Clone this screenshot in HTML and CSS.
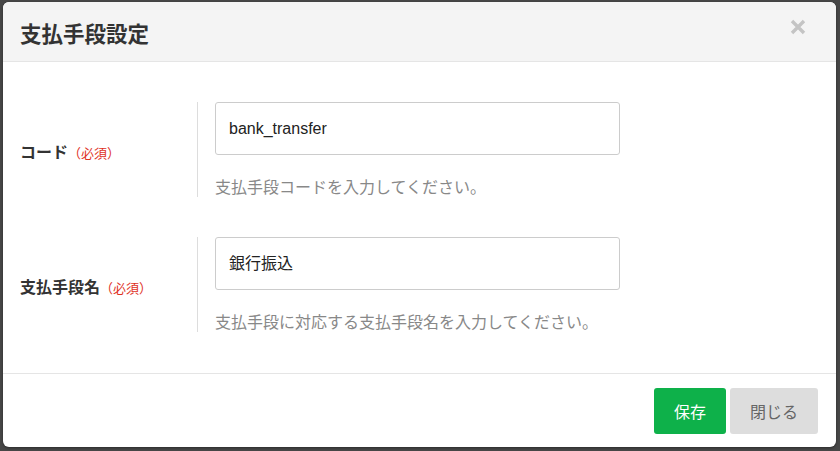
FILE: index.html
```html
<!DOCTYPE html>
<html lang="ja">
<head>
<meta charset="utf-8">
<title>支払手段設定</title>
<link rel="stylesheet" href="styles.css">
</head>
<body>
<div class="modal">
  <div class="modal-header">
    <h1 class="modal-title">支払手段設定</h1>
    <button class="close" aria-label="close">
      <svg width="16" height="16" viewBox="0 0 16 16"><path d="M2 2L14 14M14 2L2 14" stroke="#c4c4c4" stroke-width="3.4" stroke-linecap="butt"/></svg>
    </button>
  </div>
  <div class="modal-body">
    <div class="form-row">
      <div class="form-label">コード<span class="req">（必須）</span></div>
      <div class="form-field">
        <div class="input">bank_transfer</div>
        <div class="help">支払手段コードを入力してください。</div>
      </div>
    </div>
    <div class="form-row">
      <div class="form-label">支払手段名<span class="req">（必須）</span></div>
      <div class="form-field">
        <div class="input">銀行振込</div>
        <div class="help">支払手段に対応する支払手段名を入力してください。</div>
      </div>
    </div>
  </div>
  <div class="modal-footer">
    <button class="btn btn-save">保存</button>
    <button class="btn btn-close">閉じる</button>
  </div>
</div>
</body>
</html>
```

FILE: styles.css
```css
* { box-sizing: border-box; }
html, body { margin: 0; padding: 0; }
body {
  background: #474747;
  width: 840px;
  height: 451px;
  overflow: hidden;
  font-family: "Liberation Sans", "Noto Sans CJK JP", sans-serif;
  color: #333;
  padding: 2px 4px 0 3px;
}
.modal {
  width: 833px;
  height: 445px;
  background: #fff;
  border-radius: 6px;
  overflow: hidden;
  display: flex;
  flex-direction: column;
  box-shadow: 0 1px 3px rgba(0,0,0,0.4);
}
.modal-header {
  height: 60px;
  background: #f4f4f4;
  border-bottom: 1px solid #e5e5e5;
  display: flex;
  align-items: center;
  justify-content: space-between;
  padding: 0 30px 0 17px;
}
.modal-title {
  margin: 0;
  font-size: 21.5px;
  font-weight: bold;
  color: #333;
  font-family: "Noto Sans CJK JP", sans-serif;
  padding-top: 1px;
}
.close {
  border: 0;
  background: none;
  padding: 0;
  width: 16px;
  height: 16px;
  margin-top: -9px;
  display: flex;
}
.modal-body {
  flex: 1;
  padding: 40px 0 41px 17px;
  display: flex;
  flex-direction: column;
  gap: 40px;
}
.form-row {
  display: flex;
  align-items: center;
  height: 95px;
}
.form-label {
  width: 177px;
  font-family: "Noto Sans CJK JP", sans-serif;
  font-weight: bold;
  font-size: 16px;
  color: #333;
  padding-top: 2px;
}
.req {
  color: #e0321f;
  font-size: 13px;
  font-weight: normal;
}
.form-field {
  border-left: 1px solid #dddddd;
  height: 95px;
  padding-left: 17px;
}
.input {
  width: 405px;
  height: 53px;
  border: 1px solid #cccccc;
  border-radius: 3px;
  padding: 0 13px;
  font-size: 16px;
  line-height: 51px;
  color: #222;
  font-family: "Liberation Sans", "Noto Sans CJK JP", sans-serif;
}
.help {
  margin-top: 21px;
  font-size: 16px;
  line-height: 21px;
  color: #888;
  font-family: "Noto Sans CJK JP", sans-serif;
}
.modal-footer {
  border-top: 1px solid #e5e5e5;
  height: 74px;
  display: flex;
  justify-content: flex-end;
  align-items: center;
  gap: 4px;
  padding: 0 18px 0 0;
}
.btn {
  border: 0;
  height: 46px;
  border-radius: 3px;
  font-size: 16px;
  font-family: "Noto Sans CJK JP", sans-serif;
  padding: 0;
}
.btn-save {
  width: 72px;
  background: #0eb14a;
  color: #fff;
}
.btn-close {
  width: 88px;
  background: #dddddd;
  color: #666;
}
```
